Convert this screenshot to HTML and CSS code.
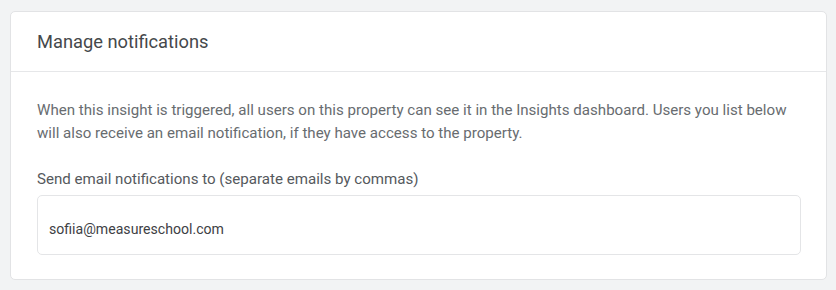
FILE: index.html
```html
<!DOCTYPE html>
<html>
<head>
<meta charset="utf-8">
<link rel="stylesheet" href="styles.css">
</head>
<body>
<div class="card">
  <div class="card-header">Manage notifications</div>
  <div class="card-body">
    <p class="desc">When this insight is triggered, all users on this property can see it in the Insights dashboard. Users you list below<br>will also receive an email notification, if they have access to the property.</p>
    <div class="label">Send email notifications to (separate emails by commas)</div>
    <div class="input">sofiia@measureschool.com</div>
  </div>
</div>
</body>
</html>
```
FILE: styles.css
```css
html, body { margin: 0; padding: 0; }
body {
  background: #f2f3f4;
  font-family: Roboto, "Noto Sans", Arial, sans-serif;
  width: 836px;
  height: 290px;
  padding: 11px 9px 0 10px;
  box-sizing: border-box;
}
.card {
  background: #fff;
  border: 1px solid #e2e3e5;
  border-radius: 5px;
  height: 269px;
  box-sizing: border-box;
}
.card-header {
  height: 60px;
  box-sizing: border-box;
  padding: 19px 26px 0;
  font-size: 18.3px;
  color: #45484b;
  border-bottom: 1px solid #e6e7e9;
}
.card-body {
  padding: 27px 25px 0 26px;
}
.desc {
  margin: 0;
  font-size: 15.1px;
  line-height: 23px;
  color: #686c70;
}
.label {
  margin-top: 23px;
  font-size: 15.1px;
  line-height: 23px;
  color: #55595d;
}
.input {
  margin-top: 4px;
  height: 60px;
  box-sizing: border-box;
  border: 1px solid #e4e5e7;
  border-radius: 5px;
  padding: 8px 11px 0;
  display: flex;
  align-items: center;
  font-size: 14.1px;
  color: #3e4145;
}
```
